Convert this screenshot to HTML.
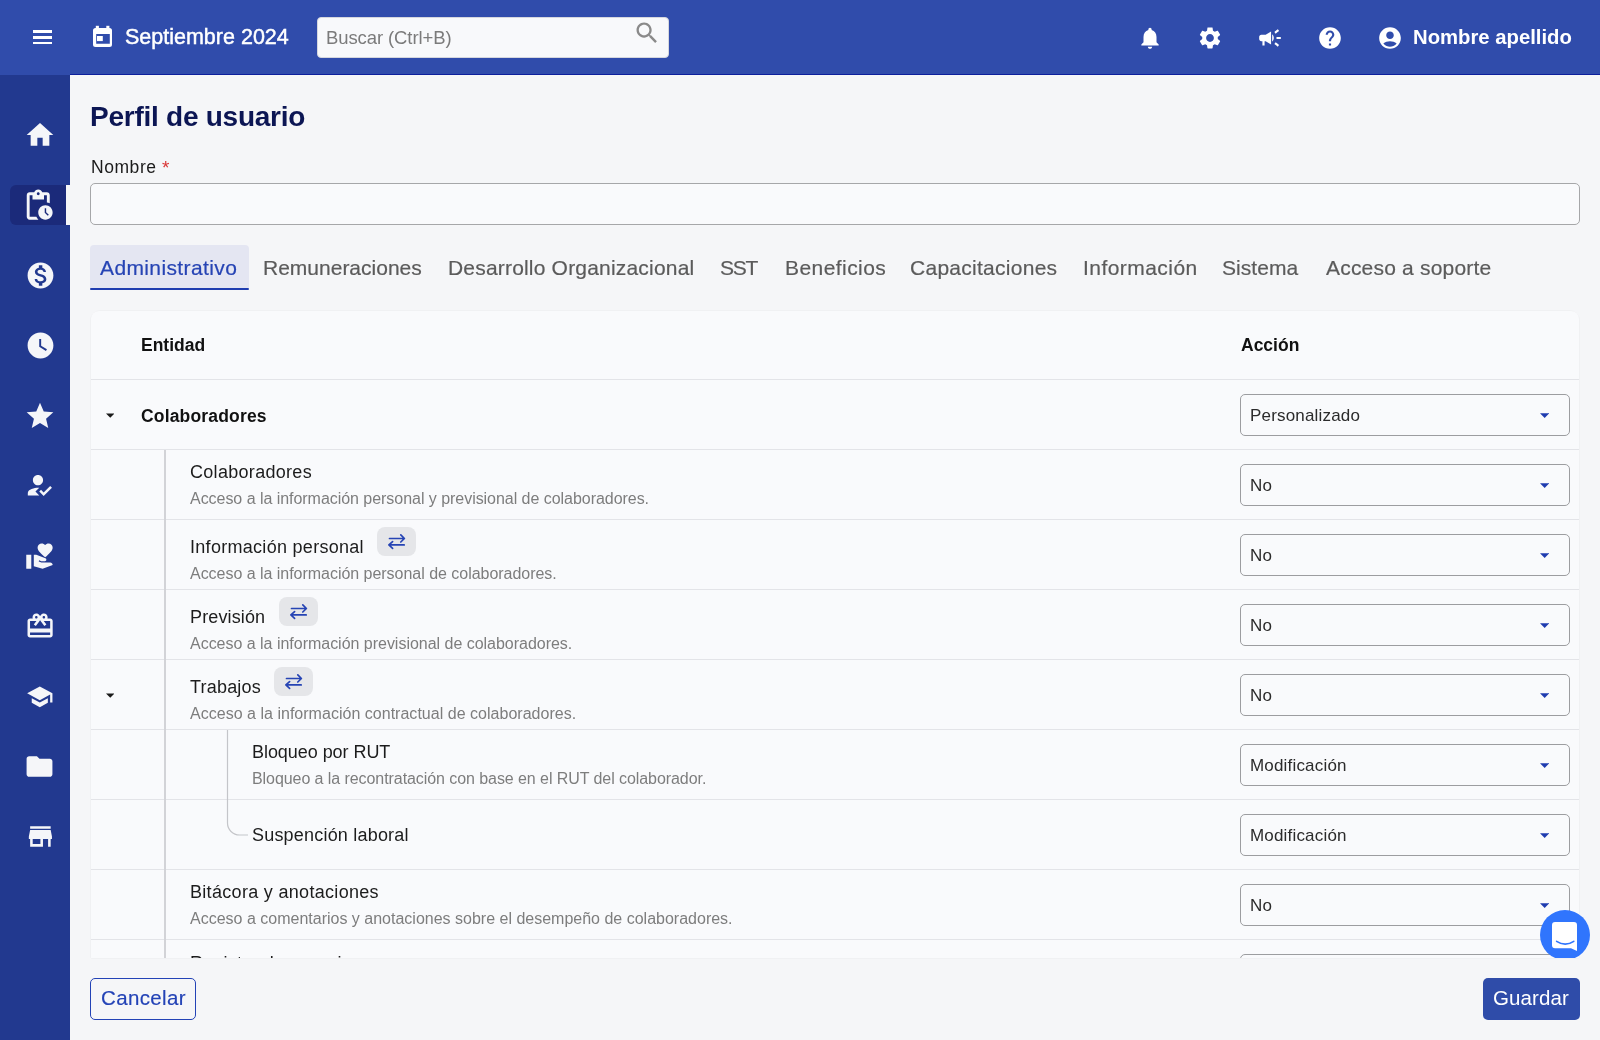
<!DOCTYPE html>
<html><head><meta charset="utf-8"><title>Perfil de usuario</title>
<style>
html,body{margin:0;padding:0;}
body{width:1600px;height:1040px;overflow:hidden;position:relative;background:#f5f6f8;font-family:"Liberation Sans",sans-serif;}
.t{position:absolute;white-space:nowrap;will-change:transform;}
svg{display:block;}
</style></head><body>
<div style="position:absolute;left:0px;top:0px;width:1600px;height:75px;background:#304cab;"></div>
<div style="position:absolute;left:70px;top:74px;width:1530px;height:1px;background:#0c1f9c;"></div>
<div style="position:absolute;left:33px;top:30.3px;width:19px;height:2.6px;background:#fff;"></div>
<div style="position:absolute;left:33px;top:36.2px;width:19px;height:2.6px;background:#fff;"></div>
<div style="position:absolute;left:33px;top:41.8px;width:19px;height:2.6px;background:#fff;"></div>
<svg style="position:absolute;left:0;top:0;width:200px;height:74px" viewBox="0 0 200 74"><path fill="#fff" fill-rule="evenodd" d="M95.5 28h14a2.5 2.5 0 0 1 2.5 2.5v14a2.5 2.5 0 0 1-2.5 2.5h-14a2.5 2.5 0 0 1-2.5-2.5v-14a2.5 2.5 0 0 1 2.5-2.5zM96.2 34.1v9.6h13.6v-9.6z"/><rect fill="#fff" x="95.8" y="25.8" width="3.1" height="3"/><rect fill="#fff" x="106.3" y="25.8" width="3.1" height="3"/><rect fill="#fff" x="97" y="36" width="5.8" height="5.1"/></svg>
<div class="t" style="left:125.20px;top:27.20px;font-size:21.5px;line-height:21.5px;color:#fff;letter-spacing:0.0px;-webkit-text-stroke:0.45px #fff;">Septiembre 2024</div>
<div style="position:absolute;left:317px;top:17px;width:352px;height:41px;background:#f8f9fb;border-radius:4px;box-sizing:border-box;border:1px solid #d5d7de;"></div>
<div class="t" style="left:326.00px;top:28.59px;font-size:18.5px;line-height:18.5px;color:#7b7b7b;letter-spacing:-0.1px;">Buscar (Ctrl+B)</div>
<svg style="position:absolute;left:632.5px;top:18.5px;width:28px;height:28px;" viewBox="0 0 24 24"><path fill="#8a8a8a" d="M15.5 14h-.79l-.28-.27C15.41 12.59 16 11.11 16 9.5 16 5.91 13.09 3 9.5 3S3 5.91 3 9.5 5.91 16 9.5 16c1.61 0 3.09-.59 4.23-1.57l.27.28v.79l5 4.99L20.49 19l-4.99-5zm-6 0C7.01 14 5 11.99 5 9.5S7.01 5 9.5 5 14 7.01 14 9.5 11.99 14 9.5 14z"/></svg>
<svg style="position:absolute;left:1137px;top:24.6px;width:26px;height:26px;" viewBox="0 0 24 24"><path fill="#fff" d="M12 22c1.1 0 2-.9 2-2h-4c0 1.1.89 2 2 2zm6-6v-5c0-3.07-1.64-5.64-4.5-6.32V4c0-.83-.67-1.5-1.5-1.5s-1.5.67-1.5 1.5v.68C7.63 5.36 6 7.92 6 11v5l-2 2v1h16v-1l-2-2z"/></svg>
<svg style="position:absolute;left:1197px;top:24.6px;width:26px;height:26px;" viewBox="0 0 24 24"><path fill="#fff" d="M19.14 12.94c.04-.3.06-.61.06-.94 0-.32-.02-.64-.07-.94l2.03-1.58c.18-.14.23-.41.12-.61l-1.92-3.32c-.12-.22-.37-.29-.59-.22l-2.39.96c-.5-.38-1.03-.7-1.62-.94l-.36-2.54c-.04-.24-.24-.41-.48-.41h-3.84c-.24 0-.43.17-.47.41l-.36 2.54c-.59.24-1.13.57-1.62.94l-2.39-.96c-.22-.08-.47 0-.59.22L2.74 8.87c-.12.21-.08.47.12.61l2.03 1.58c-.05.3-.09.63-.09.94s.02.64.07.94l-2.03 1.58c-.18.14-.23.41-.12.61l1.92 3.32c.12.22.37.29.59.22l2.39-.96c.5.38 1.03.7 1.62.94l.36 2.54c.05.24.24.41.48.41h3.84c.24 0 .44-.17.47-.41l.36-2.54c.59-.24 1.13-.56 1.62-.94l2.39.96c.22.08.47 0 .59-.22l1.92-3.32c.12-.22.07-.47-.12-.61l-2.010-1.58zM12 15.6c-1.98 0-3.6-1.62-3.6-3.6s1.62-3.6 3.6-3.6 3.6 1.62 3.6 3.6-1.62 3.6-3.6 3.6z"/></svg>
<svg style="position:absolute;left:1257px;top:24.6px;width:26px;height:26px;" viewBox="0 0 24 24"><path fill="#fff" d="M18 11v2h4v-2h-4zm-2 6.61c.96.71 2.21 1.65 3.2 2.39.4-.53.8-1.07 1.2-1.6-.99-.74-2.24-1.68-3.2-2.4-.4.54-.8 1.08-1.2 1.61zM20.4 5.6c-.4-.53-.8-1.07-1.2-1.6-.99.74-2.24 1.68-3.2 2.4.4.53.8 1.07 1.2 1.6.96-.72 2.21-1.65 3.2-2.4zM4 9c-1.1 0-2 .9-2 2v2c0 1.1.9 2 2 2h1v4h2v-4h1l5 3V6L8 9H4zm11.5 3c0-1.33-.58-2.53-1.5-3.35v6.69c.92-.81 1.5-2.01 1.5-3.34z"/></svg>
<svg style="position:absolute;left:1317px;top:24.6px;width:26px;height:26px;" viewBox="0 0 24 24"><path fill="#fff" d="M12 2C6.48 2 2 6.48 2 12s4.48 10 10 10 10-4.48 10-10S17.52 2 12 2zm1 17h-2v-2h2v2zm2.07-7.75l-.9.92C13.45 12.9 13 13.5 13 15h-2v-.5c0-1.1.45-2.1 1.17-2.83l1.24-1.26c.37-.36.59-.86.59-1.41 0-1.1-.9-2-2-2s-2 .9-2 2H8c0-2.21 1.79-4 4-4s4 1.79 4 4c0 .88-.36 1.68-.93 2.25z"/></svg>
<svg style="position:absolute;left:1377px;top:24.6px;width:26px;height:26px;" viewBox="0 0 24 24"><path fill="#fff" d="M12 2C6.48 2 2 6.48 2 12s4.48 10 10 10 10-4.48 10-10S17.52 2 12 2zm0 4c1.93 0 3.5 1.57 3.5 3.5S13.93 13 12 13s-3.5-1.57-3.5-3.5S10.07 6 12 6zm0 14c-2.03 0-4.43-.82-6.14-2.88C7.55 15.8 9.68 15 12 15s4.45.8 6.14 2.12C16.43 19.18 14.03 20 12 20z"/></svg>
<div class="t" style="left:1412.50px;top:27.21px;font-size:20.3px;line-height:20.3px;color:#fff;font-weight:700;letter-spacing:0.0px;">Nombre apellido</div>
<div style="position:absolute;left:0px;top:75px;width:70px;height:965px;background:#22398f;"></div>
<div style="position:absolute;left:10px;top:185px;width:56px;height:40px;background:#1b2a7a;border-radius:6px 0 0 6px;"></div>
<div style="position:absolute;left:66px;top:185px;width:4px;height:40px;background:#f5f6f8;"></div>
<svg style="position:absolute;left:24px;top:119px;width:32px;height:32px;" viewBox="0 0 24 24"><path fill="#f5f6f9" d="M10 20v-6h4v6h5v-8h3L12 3 2 12h3v8z"/></svg>
<svg style="position:absolute;left:21.3px;top:188.4px;width:34.5px;height:34.5px;" viewBox="0 0 24 24"><path fill="#f5f6f9" d="M17 12c-2.76 0-5 2.24-5 5s2.24 5 5 5 5-2.24 5-5-2.24-5-5-5zm1.65 7.35L16.5 17.2V14h1v2.79l1.85 1.85-.7.71zM18 3h-3.18C14.4 1.84 13.3 1 12 1s-2.4.84-2.82 2H6c-1.1 0-2 .9-2 2v15c0 1.1.9 2 2 2h6.11c-.59-.57-1.07-1.25-1.42-2H6V5h2v3h8V5h2v5.08c.71.1 1.38.31 2 .6V5c0-1.1-.9-2-2-2zm-6 2c-.55 0-1-.45-1-1s.45-1 1-1 1 .45 1 1-.45 1-1 1z"/></svg>
<svg style="position:absolute;left:24.5px;top:259.6px;width:31px;height:31px;" viewBox="0 0 24 24"><path fill="#f5f6f9" d="M12 2C6.48 2 2 6.48 2 12s4.48 10 10 10 10-4.48 10-10S17.52 2 12 2zm1.41 16.09V20h-2.67v-1.93c-1.71-.36-3.16-1.46-3.27-3.4h1.96c.1 1.05.82 1.87 2.650 1.87 1.96 0 2.4-.98 2.4-1.59 0-.83-.44-1.61-2.67-2.14-2.48-.6-4.18-1.62-4.18-3.67 0-1.72 1.39-2.84 3.11-3.21V4h2.67v1.95c1.86.45 2.79 1.86 2.85 3.39H14.3c-.05-1.11-.64-1.870-2.220-1.87-1.5 0-2.4.68-2.4 1.64 0 .84.65 1.39 2.67 1.91s4.18 1.39 4.18 3.91c-.01 1.83-1.38 2.83-3.12 3.16z"/></svg>
<svg style="position:absolute;left:24.5px;top:329.9px;width:31px;height:31px;" viewBox="0 0 24 24"><path fill="#f5f6f9" d="M12 2C6.5 2 2 6.5 2 12s4.5 10 10 10 10-4.5 10-10S17.5 2 12 2zm4.2 14.2L11 13V7h1.5v5.2l4.5 2.7-.8 1.3z"/></svg>
<svg style="position:absolute;left:23.9px;top:400.1px;width:32px;height:32px;" viewBox="0 0 24 24"><path fill="#f5f6f9" d="M12 17.27L18.18 21l-1.64-7.030L22 9.24l-7.19-.61L12 2 9.19 8.63 2 9.24l5.46 4.73L5.82 21z"/></svg>
<svg style="position:absolute;left:24.1px;top:469.9px;width:30.5px;height:30.5px;" viewBox="0 0 24 24"><path fill="#f5f6f9" d="M9 17l3-2.94c-.39-.04-.68-.06-1-.06-2.67 0-8 1.34-8 4v2h9l-3-3zm2-5c2.21 0 4-1.79 4-4s-1.79-4-4-4-4 1.79-4 4 1.79 4 4 4zm4.47 8.5L12 17l1.4-1.41 2.07 2.08 5.13-5.17 1.4 1.41-6.53 6.59z"/></svg>
<svg style="position:absolute;left:25.3px;top:540.7px;width:30.2px;height:30.2px;" viewBox="0 0 24 24"><path fill="#f5f6f9" d="M1 11h4v11H1zm15-7.75C16.65 2.49 17.66 2 18.7 2 20.55 2 22 3.45 22 5.3c0 2.27-2.91 4.9-6 7.7-3.09-2.81-6-5.44-6-7.7C10 3.45 11.45 2 13.3 2c1.04 0 2.05.49 2.7 1.25zM20 17h-7l-2.09-.73.33-.94L13 16h2.82c.65 0 1.18-.53 1.18-1.18 0-.49-.31-.93-.77-1.11L8.97 11H7v9.02L14 22l8-3c-.01-1.1-.89-2-2-2z"/></svg>
<svg style="position:absolute;left:24.8px;top:610.9px;width:30.2px;height:30.2px;" viewBox="0 0 24 24"><path fill="#f5f6f9" d="M20 6h-2.18c.11-.31.18-.65.18-1 0-1.66-1.34-3-3-3-1.05 0-1.96.54-2.5 1.35l-.5.67-.5-.68C10.96 2.54 10.05 2 9 2 7.34 2 6 3.34 6 5c0 .35.07.69.18 1H4c-1.11 0-1.99.89-1.99 2L2 19c0 1.11.89 2 2 2h16c1.11 0 2-.89 2-2V8c0-1.11-.89-2-2-2zm-5-2c.55 0 1 .45 1 1s-.45 1-1 1-1-.45-1-1 .45-1 1-1zM9 4c.55 0 1 .45 1 1s-.45 1-1 1-1-.45-1-1 .45-1 1-1zm11 15H4v-2h16v2zm0-5H4V8h5.08L7 10.83 8.62 12 11 8.76l1-1.36 1 1.36L15.38 12 17 10.83 14.92 8H20v6z"/></svg>
<svg style="position:absolute;left:26.4px;top:682.6px;width:27.6px;height:27.6px;" viewBox="0 0 24 24"><path fill="#f5f6f9" d="M5 13.18v4L12 21l7-3.82v-4L12 17l-7-3.82zM12 3L1 9l11 6 9-4.91V17h2V9L12 3z"/></svg>
<svg style="position:absolute;left:24.4px;top:750.7px;width:31px;height:31px;" viewBox="0 0 24 24"><path fill="#f5f6f9" d="M10 4H4c-1.1 0-1.99.9-1.99 2L2 18c0 1.1.9 2 2 2h16c1.1 0 2-.9 2-2V8c0-1.1-.9-2-2-2h-8l-2-2z"/></svg>
<svg style="position:absolute;left:24.7px;top:821.1px;width:30.8px;height:30.8px;" viewBox="0 0 24 24"><path fill="#f5f6f9" d="M20 4H4v2h16V4zm1 10v-2l-1-5H4l-1 5v2h1v6h10v-6h4v6h2v-6h1zm-9 4H6v-4h6v4z"/></svg>
<div style="position:absolute;left:70px;top:75px;width:1530px;height:965px;background:#f5f6f8;"></div>
<div class="t" style="left:89.75px;top:102.59px;font-size:28px;line-height:28px;color:#0c1654;font-weight:700;letter-spacing:-0.25px;">Perfil de usuario</div>
<div class="t" style="left:90.50px;top:159.08px;font-size:17.5px;line-height:17.5px;color:#1b1b1b;letter-spacing:0.55px;">Nombre</div>
<div class="t" style="left:162.00px;top:158.11px;font-size:19px;line-height:19px;color:#d93636;letter-spacing:0.0px;">*</div>
<div style="position:absolute;left:90px;top:183px;width:1490px;height:42px;background:#f9fafc;border:1.6px solid #a6a7a9;border-radius:5px;box-sizing:border-box;"></div>
<div style="position:absolute;left:90px;top:245px;width:159px;height:43px;background:#e4e6f2;border-radius:4px 4px 0 0;"></div>
<div style="position:absolute;left:90px;top:288px;width:159px;height:2px;background:#1f3db0;border-radius:1px;"></div>
<div class="t" style="left:100.00px;top:257.22px;font-size:21px;line-height:21px;color:#2644b4;letter-spacing:0.38px;-webkit-text-stroke:0.2px #2644b4;">Administrativo</div>
<div class="t" style="left:263.25px;top:257.22px;font-size:21px;line-height:21px;color:#5b5b5b;letter-spacing:0px;-webkit-text-stroke:0.2px #5b5b5b;">Remuneraciones</div>
<div class="t" style="left:448.40px;top:257.22px;font-size:21px;line-height:21px;color:#5b5b5b;letter-spacing:0.19px;-webkit-text-stroke:0.2px #5b5b5b;">Desarrollo Organizacional</div>
<div class="t" style="left:719.50px;top:257.22px;font-size:21px;line-height:21px;color:#5b5b5b;letter-spacing:-1.2px;-webkit-text-stroke:0.2px #5b5b5b;">SST</div>
<div class="t" style="left:784.50px;top:257.22px;font-size:21px;line-height:21px;color:#5b5b5b;letter-spacing:0.44px;-webkit-text-stroke:0.2px #5b5b5b;">Beneficios</div>
<div class="t" style="left:909.50px;top:257.22px;font-size:21px;line-height:21px;color:#5b5b5b;letter-spacing:0.27px;-webkit-text-stroke:0.2px #5b5b5b;">Capacitaciones</div>
<div class="t" style="left:1082.90px;top:257.22px;font-size:21px;line-height:21px;color:#5b5b5b;letter-spacing:0.45px;-webkit-text-stroke:0.2px #5b5b5b;">Información</div>
<div class="t" style="left:1222.10px;top:257.22px;font-size:21px;line-height:21px;color:#5b5b5b;letter-spacing:0.05px;-webkit-text-stroke:0.2px #5b5b5b;">Sistema</div>
<div class="t" style="left:1326.20px;top:257.22px;font-size:21px;line-height:21px;color:#5b5b5b;letter-spacing:0.2px;-webkit-text-stroke:0.2px #5b5b5b;">Acceso a soporte</div>
<div style="position:absolute;left:90.5px;top:310.5px;width:1488.5px;height:647px;box-shadow:0 0 1.2px rgba(0,0,0,0.14);border-radius:9px 9px 0 0;"></div>
<div style="position:absolute;left:91px;top:311px;width:1488px;height:647px;overflow:hidden;background:#f9fafc;border-radius:8px 8px 0 0;">
<div style="position:absolute;left:-91px;top:-311px;width:1600px;height:1040px;">
<div class="t" style="left:140.50px;top:336.68px;font-size:17.5px;line-height:17.5px;color:#111;font-weight:700;letter-spacing:0.0px;">Entidad</div>
<div class="t" style="left:1240.50px;top:336.68px;font-size:17.5px;line-height:17.5px;color:#111;font-weight:700;letter-spacing:0.0px;">Acción</div>
<div style="position:absolute;left:91px;top:379px;width:1488px;height:1px;background:#e3e4e8;"></div>
<div style="position:absolute;left:91px;top:449px;width:1488px;height:1px;background:#e3e4e8;"></div>
<div style="position:absolute;left:91px;top:519px;width:1488px;height:1px;background:#e3e4e8;"></div>
<div style="position:absolute;left:91px;top:589px;width:1488px;height:1px;background:#e3e4e8;"></div>
<div style="position:absolute;left:91px;top:659px;width:1488px;height:1px;background:#e3e4e8;"></div>
<div style="position:absolute;left:91px;top:729px;width:1488px;height:1px;background:#e3e4e8;"></div>
<div style="position:absolute;left:91px;top:799px;width:1488px;height:1px;background:#e3e4e8;"></div>
<div style="position:absolute;left:91px;top:869px;width:1488px;height:1px;background:#e3e4e8;"></div>
<div style="position:absolute;left:91px;top:939px;width:1488px;height:1px;background:#e3e4e8;"></div>
<div style="position:absolute;left:164px;top:450px;width:2px;height:520px;background:#d2d3d7;"></div>
<svg style="position:absolute;left:105.65px;top:412.5px;width:8.5px;height:5px" viewBox="0 0 10 5"><path fill="#1a1a1a" d="M0 0h10L5 5z"/></svg>
<svg style="position:absolute;left:105.65px;top:692.5px;width:8.5px;height:5px" viewBox="0 0 10 5"><path fill="#1a1a1a" d="M0 0h10L5 5z"/></svg>
<div class="t" style="left:140.50px;top:407.58px;font-size:17.5px;line-height:17.5px;color:#111;font-weight:700;letter-spacing:0.17px;">Colaboradores</div>
<div class="t" style="left:190.00px;top:462.51px;font-size:18px;line-height:18px;color:#1c1c1c;letter-spacing:0.3px;">Colaboradores</div>
<div class="t" style="left:190.00px;top:490.85px;font-size:16px;line-height:16px;color:#7d7d7d;letter-spacing:-0.04px;">Acceso a la información personal y previsional de colaboradores.</div>
<div class="t" style="left:190.00px;top:537.51px;font-size:18px;line-height:18px;color:#1c1c1c;letter-spacing:0.29px;">Información personal</div>
<div class="t" style="left:190.00px;top:565.85px;font-size:16px;line-height:16px;color:#7d7d7d;letter-spacing:-0.03px;">Acceso a la información personal de colaboradores.</div>
<div style="position:absolute;left:376.5px;top:526.6px;width:39.3px;height:29.2px;background:#e5e6e9;border-radius:8px;"></div>
<svg style="position:absolute;left:376.5px;top:526.6px;width:40px;height:30px" viewBox="0 0 40 30"><g fill="none" stroke="#2644b4" stroke-width="1.7" stroke-linecap="round" stroke-linejoin="round"><path d="M12.5 11.5H27.2M23.8 7.8L27.4 11.5L23.8 15"/><path d="M27.2 17.9H12M15.6 14.6L11.9 17.9L15.6 21.3"/></g></svg>
<div class="t" style="left:190.00px;top:607.51px;font-size:18px;line-height:18px;color:#1c1c1c;letter-spacing:0.13px;">Previsión</div>
<div class="t" style="left:190.00px;top:635.85px;font-size:16px;line-height:16px;color:#7d7d7d;letter-spacing:-0.02px;">Acceso a la información previsional de colaboradores.</div>
<div style="position:absolute;left:279px;top:596.6px;width:39.3px;height:29.2px;background:#e5e6e9;border-radius:8px;"></div>
<svg style="position:absolute;left:279px;top:596.6px;width:40px;height:30px" viewBox="0 0 40 30"><g fill="none" stroke="#2644b4" stroke-width="1.7" stroke-linecap="round" stroke-linejoin="round"><path d="M12.5 11.5H27.2M23.8 7.8L27.4 11.5L23.8 15"/><path d="M27.2 17.9H12M15.6 14.6L11.9 17.9L15.6 21.3"/></g></svg>
<div class="t" style="left:190.00px;top:677.51px;font-size:18px;line-height:18px;color:#1c1c1c;letter-spacing:0.2px;">Trabajos</div>
<div class="t" style="left:190.00px;top:705.85px;font-size:16px;line-height:16px;color:#7d7d7d;letter-spacing:0.02px;">Acceso a la información contractual de colaboradores.</div>
<div style="position:absolute;left:274px;top:666.6px;width:39.3px;height:29.2px;background:#e5e6e9;border-radius:8px;"></div>
<svg style="position:absolute;left:274px;top:666.6px;width:40px;height:30px" viewBox="0 0 40 30"><g fill="none" stroke="#2644b4" stroke-width="1.7" stroke-linecap="round" stroke-linejoin="round"><path d="M12.5 11.5H27.2M23.8 7.8L27.4 11.5L23.8 15"/><path d="M27.2 17.9H12M15.6 14.6L11.9 17.9L15.6 21.3"/></g></svg>
<div class="t" style="left:252.00px;top:742.51px;font-size:18px;line-height:18px;color:#1c1c1c;letter-spacing:-0.05px;">Bloqueo por RUT</div>
<div class="t" style="left:252.00px;top:770.85px;font-size:16px;line-height:16px;color:#7d7d7d;letter-spacing:-0.07px;">Bloqueo a la recontratación con base en el RUT del colaborador.</div>
<div class="t" style="left:252.00px;top:826.16px;font-size:18px;line-height:18px;color:#1c1c1c;letter-spacing:0.2px;">Suspención laboral</div>
<div class="t" style="left:190.00px;top:882.51px;font-size:18px;line-height:18px;color:#1c1c1c;letter-spacing:0.31px;">Bitácora y anotaciones</div>
<div class="t" style="left:190.00px;top:910.85px;font-size:16px;line-height:16px;color:#7d7d7d;letter-spacing:0px;">Acceso a comentarios y anotaciones sobre el desempeño de colaboradores.</div>
<div class="t" style="left:190.00px;top:954.26px;font-size:18px;line-height:18px;color:#1c1c1c;letter-spacing:0.2px;">Registro de vacaciones</div>
<svg style="position:absolute;left:0;top:0;width:300px;height:900px" viewBox="0 0 300 900"><path d="M227.5 730V823a12 12 0 0 0 12 12H248" fill="none" stroke="#c4c5c9" stroke-width="1.2"/></svg>
<div style="position:absolute;left:1240px;top:394px;width:330px;height:42px;border:1.5px solid #9c9da0;border-radius:5px;box-sizing:border-box;background:#f9fafc;"></div>
<div class="t" style="left:1250.00px;top:406.81px;font-size:17px;line-height:17px;color:#2b2b2b;letter-spacing:0.18px;">Personalizado</div>
<svg style="position:absolute;left:1539.85px;top:412.55px;width:9.3px;height:5.3px" viewBox="0 0 10 5"><path fill="#1f3cb0" d="M0 0h10L5 5z"/></svg>
<div style="position:absolute;left:1240px;top:464px;width:330px;height:42px;border:1.5px solid #9c9da0;border-radius:5px;box-sizing:border-box;background:#f9fafc;"></div>
<div class="t" style="left:1250.00px;top:476.81px;font-size:17px;line-height:17px;color:#2b2b2b;letter-spacing:0.18px;">No</div>
<svg style="position:absolute;left:1539.85px;top:482.55px;width:9.3px;height:5.3px" viewBox="0 0 10 5"><path fill="#1f3cb0" d="M0 0h10L5 5z"/></svg>
<div style="position:absolute;left:1240px;top:534px;width:330px;height:42px;border:1.5px solid #9c9da0;border-radius:5px;box-sizing:border-box;background:#f9fafc;"></div>
<div class="t" style="left:1250.00px;top:546.81px;font-size:17px;line-height:17px;color:#2b2b2b;letter-spacing:0.18px;">No</div>
<svg style="position:absolute;left:1539.85px;top:552.5500000000001px;width:9.3px;height:5.3px" viewBox="0 0 10 5"><path fill="#1f3cb0" d="M0 0h10L5 5z"/></svg>
<div style="position:absolute;left:1240px;top:604px;width:330px;height:42px;border:1.5px solid #9c9da0;border-radius:5px;box-sizing:border-box;background:#f9fafc;"></div>
<div class="t" style="left:1250.00px;top:616.81px;font-size:17px;line-height:17px;color:#2b2b2b;letter-spacing:0.18px;">No</div>
<svg style="position:absolute;left:1539.85px;top:622.5500000000001px;width:9.3px;height:5.3px" viewBox="0 0 10 5"><path fill="#1f3cb0" d="M0 0h10L5 5z"/></svg>
<div style="position:absolute;left:1240px;top:674px;width:330px;height:42px;border:1.5px solid #9c9da0;border-radius:5px;box-sizing:border-box;background:#f9fafc;"></div>
<div class="t" style="left:1250.00px;top:686.81px;font-size:17px;line-height:17px;color:#2b2b2b;letter-spacing:0.18px;">No</div>
<svg style="position:absolute;left:1539.85px;top:692.5500000000001px;width:9.3px;height:5.3px" viewBox="0 0 10 5"><path fill="#1f3cb0" d="M0 0h10L5 5z"/></svg>
<div style="position:absolute;left:1240px;top:744px;width:330px;height:42px;border:1.5px solid #9c9da0;border-radius:5px;box-sizing:border-box;background:#f9fafc;"></div>
<div class="t" style="left:1250.00px;top:756.81px;font-size:17px;line-height:17px;color:#2b2b2b;letter-spacing:0.18px;">Modificación</div>
<svg style="position:absolute;left:1539.85px;top:762.5500000000001px;width:9.3px;height:5.3px" viewBox="0 0 10 5"><path fill="#1f3cb0" d="M0 0h10L5 5z"/></svg>
<div style="position:absolute;left:1240px;top:814px;width:330px;height:42px;border:1.5px solid #9c9da0;border-radius:5px;box-sizing:border-box;background:#f9fafc;"></div>
<div class="t" style="left:1250.00px;top:826.81px;font-size:17px;line-height:17px;color:#2b2b2b;letter-spacing:0.18px;">Modificación</div>
<svg style="position:absolute;left:1539.85px;top:832.5500000000001px;width:9.3px;height:5.3px" viewBox="0 0 10 5"><path fill="#1f3cb0" d="M0 0h10L5 5z"/></svg>
<div style="position:absolute;left:1240px;top:884px;width:330px;height:42px;border:1.5px solid #9c9da0;border-radius:5px;box-sizing:border-box;background:#f9fafc;"></div>
<div class="t" style="left:1250.00px;top:896.81px;font-size:17px;line-height:17px;color:#2b2b2b;letter-spacing:0.18px;">No</div>
<svg style="position:absolute;left:1539.85px;top:902.5500000000001px;width:9.3px;height:5.3px" viewBox="0 0 10 5"><path fill="#1f3cb0" d="M0 0h10L5 5z"/></svg>
<div style="position:absolute;left:1240px;top:954px;width:330px;height:42px;border:1.5px solid #9c9da0;border-radius:5px;box-sizing:border-box;background:#f9fafc;"></div>
<svg style="position:absolute;left:1539.85px;top:972.5500000000001px;width:9.3px;height:5.3px" viewBox="0 0 10 5"><path fill="#1f3cb0" d="M0 0h10L5 5z"/></svg>
</div></div>
<div style="position:absolute;left:1530px;top:900px;width:70px;height:57.5px;overflow:hidden;"><svg style="position:absolute;left:10px;top:10px;width:50px;height:50px" viewBox="0 0 50 50"><circle cx="25" cy="25" r="25" fill="#3075fd"/><path fill="#fff" d="M15 12h19a3 3 0 0 1 3 3v26l-6-2.7h-16a3 3 0 0 1-3-3v-20.3a3 3 0 0 1 3-3z"/><path d="M16.6 31.3q8.6 5.6 17.2 0" fill="none" stroke="#3075fd" stroke-width="1.6" stroke-linecap="round"/></svg></div>
<div style="position:absolute;left:90px;top:978px;width:106px;height:42px;border:1.6px solid #2343b6;border-radius:5px;box-sizing:border-box;"></div>
<div class="t" style="left:100.50px;top:988.24px;font-size:20.5px;line-height:20.5px;color:#2343b6;letter-spacing:0.35px;-webkit-text-stroke:0.15px #2343b6;">Cancelar</div>
<div style="position:absolute;left:1483px;top:978px;width:97px;height:42px;background:#2f4ca9;border-radius:5px;"></div>
<div class="t" style="left:1493.00px;top:988.44px;font-size:20.5px;line-height:20.5px;color:#fff;letter-spacing:0.1px;">Guardar</div>
</body></html>
